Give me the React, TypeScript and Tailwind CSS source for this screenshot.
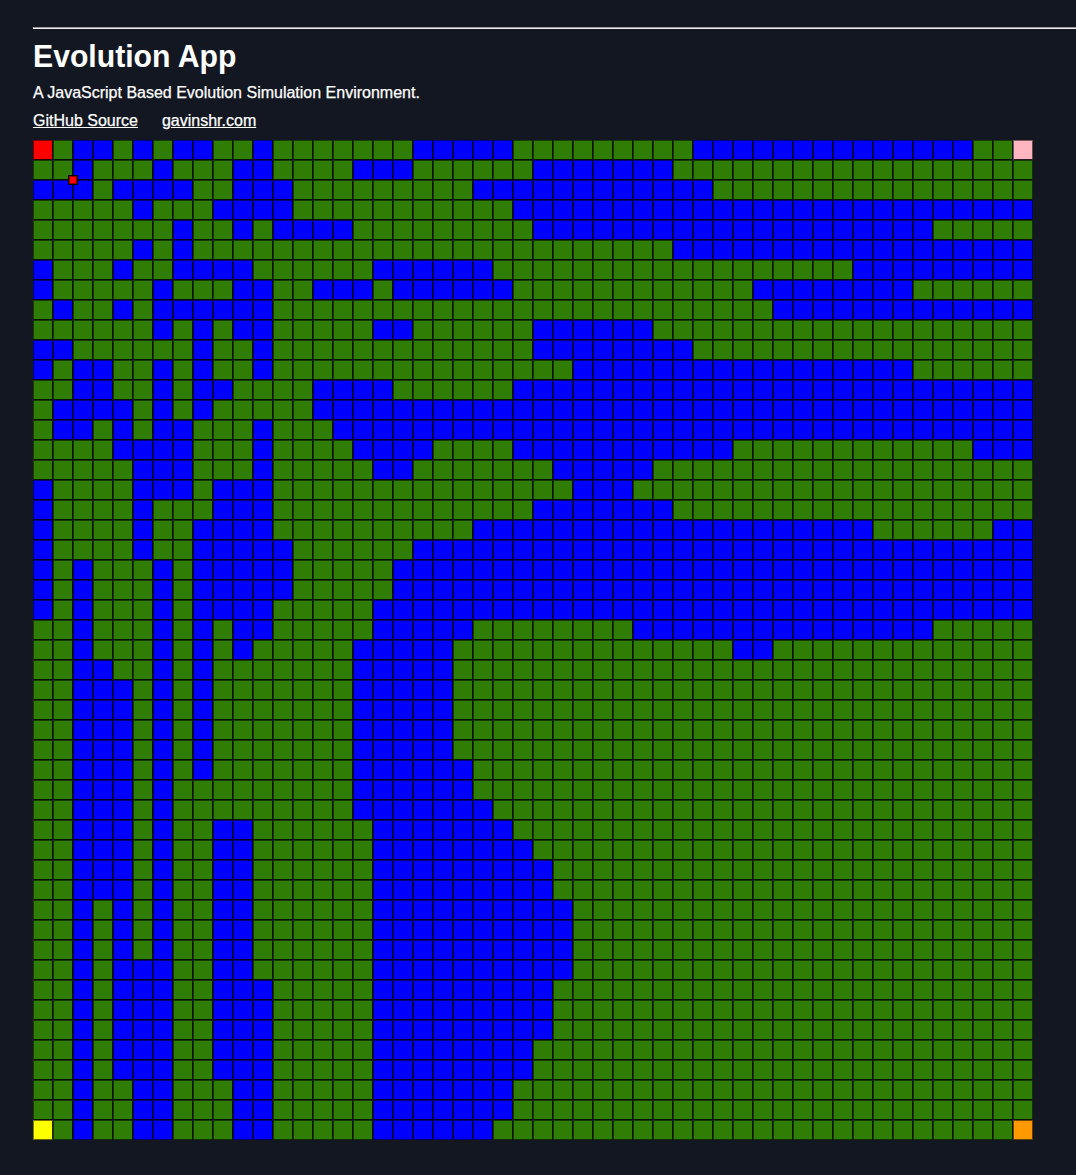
import React from "react";

const TERRAIN: string[] = [
  "2-3 5 7-8 11 19-23 33-46",
  "2 6 10-11 16-18 25-31",
  "0-2 4-7 10-12 22-33",
  "5 9-12 24-49",
  "7 10 12-15 25-44",
  "5 7 32-49",
  "0 4 7-10 17-22 41-49",
  "0 6 10-11 14-16 18-23 36-43",
  "1 4 6-11 37-49",
  "6 8 10-11 17-18 25-30",
  "0-1 8 11 25-32",
  "0 2-3 6 8 11 27-43",
  "2-3 6 8-9 14-17 24-49",
  "1-4 6 8 14-49",
  "1-2 4 6-7 11 15-49",
  "4-7 11 16-19 24-34 47-49",
  "5-7 11 17-18 26-30",
  "0 5-7 9-11 27-29",
  "0 5 9-11 25-31",
  "0 5 8-11 22-41 48-49",
  "0 5 8-12 19-49",
  "0 2 6 8-12 18-49",
  "0 2 6 8-12 18-49",
  "0 2 6 8-11 17-49",
  "2 6 8 10-11 17-21 30-44",
  "2 6 8 10 16-20 35-36",
  "2-3 6 8 16-20",
  "2-4 6 8 16-20",
  "2-4 6 8 16-20",
  "2-4 6 8 16-20",
  "2-4 6 8 16-20",
  "2-4 6 8 16-21",
  "2-4 6 16-21",
  "2-4 6 16-22",
  "2-4 6 9-10 17-23",
  "2-4 6 9-10 17-24",
  "2-4 6 9-10 17-25",
  "2-4 6 9-10 17-25",
  "2 4 6 9-10 17-26",
  "2 4 6 9-10 17-26",
  "2 4 6 9-10 17-26",
  "2 4-6 9-10 17-26",
  "2 4-6 9-11 17-25",
  "2 4-6 9-11 17-25",
  "2 4-6 9-11 17-25",
  "2 4-6 9-11 17-24",
  "2 4-6 9-11 17-24",
  "2 5-6 10-11 17-23",
  "2 5-6 10-11 17-23",
  "2 5-6 10-11 17-22",
];

const SIZE = 50;

const CORNERS: Record<string, string> = {
  "0,0": "bg-[#ff0000]",
  "0,49": "bg-[#ffb6c1]",
  "49,0": "bg-[#ffff00]",
  "49,49": "bg-[#ff9900]",
};

function isWater(row: number, col: number): boolean {
  return TERRAIN[row].split(" ").some((run) => {
    const [from, to = from] = run.split("-").map(Number);
    return col >= from && col <= to;
  });
}

function Tile({ row, col }: { row: number; col: number }) {
  const fill = CORNERS[`${row},${col}`] ?? (isWater(row, col) ? "bg-[#0000ff]" : "bg-[#2f7d05]");
  // Inner edges are stroked by two neighbours, outer edges by one.
  const right = col === SIZE - 1 ? "border-r-black/60" : "border-r-black/85";
  const bottom = row === SIZE - 1 ? "border-b-black/60" : "border-b-black/85";
  const left = col === 0 ? "border-l-black/50" : "border-l-black/55";
  const top = row === 0 ? "border-t-black/50" : "border-t-black/55";
  return <div className={`size-5 border ${fill} ${right} ${bottom} ${left} ${top}`} />;
}

export default function App() {
  return (
    <div className="h-[1175px] w-full overflow-hidden bg-[#131722] pl-[33px] pt-[27px] font-['Liberation_Sans',Arial,sans-serif] text-white">
      <div className="h-0.5 border-t border-t-[#9a9a9a] bg-[#eeeeee]" />
      <h1 className="mt-[9px] w-fit origin-left scale-x-[0.943] text-[32px] leading-9 font-bold">Evolution App</h1>
      <p className="mt-2.5 text-base leading-[18px] [-webkit-text-stroke:0.25px_white]">A JavaScript Based Evolution Simulation Environment.</p>
      <nav className="mt-2.5 flex gap-6 text-base leading-[18px] [-webkit-text-stroke:0.25px_white]">
        <a className="underline" href="#source">GitHub Source</a>
        <a className="underline" href="#site">gavinshr.com</a>
      </nav>
      <div className="relative mt-2.5 grid w-[1000px] grid-cols-[repeat(50,20px)]">
        {TERRAIN.map((_, row) =>
          Array.from({ length: SIZE }, (_, col) => <Tile key={`${row}-${col}`} row={row} col={col} />)
        )}
        <div className="absolute left-[35px] top-[35px] size-[10px] border border-black/55 bg-black">
          <div className="size-2 border border-[#900000] bg-[#ff0000]" />
        </div>
      </div>
    </div>
  );
}
